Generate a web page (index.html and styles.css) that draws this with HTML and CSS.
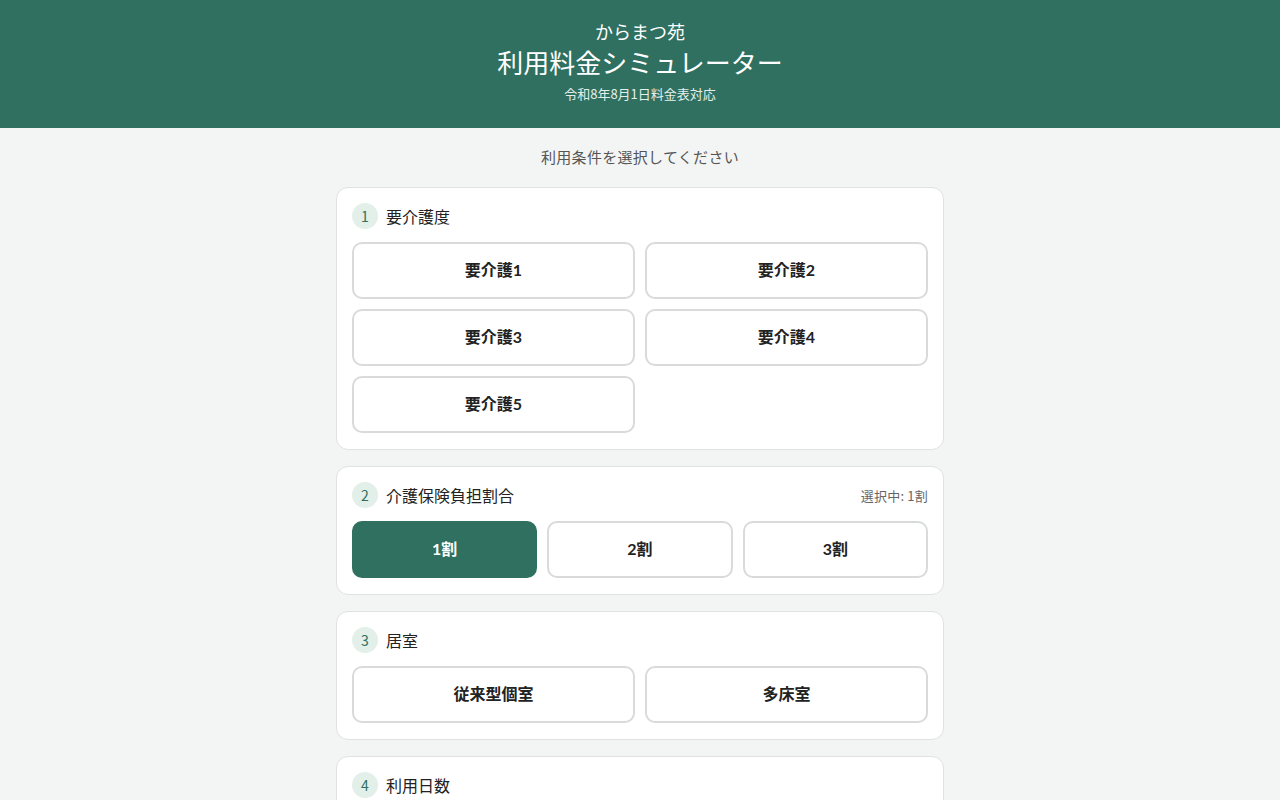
FILE: index.html
```html
<!DOCTYPE html>
<html lang="ja">
<head>
<meta charset="utf-8">
<title>からまつ苑 利用料金シミュレーター</title>
<link rel="stylesheet" href="styles.css">
</head>
<body>
<header class="hero">
  <div class="hero-org">からまつ苑</div>
  <h1 class="hero-title">利用料金シミュレーター</h1>
  <div class="hero-sub">令和8年8月1日料金表対応</div>
</header>
<main class="main">
  <p class="lead">利用条件を選択してください</p>

  <section class="card">
    <div class="card-head">
      <span class="badge">1</span>
      <span class="card-title">要介護度</span>
    </div>
    <div class="opts cols-2">
      <button class="opt">要介護1</button>
      <button class="opt">要介護2</button>
      <button class="opt">要介護3</button>
      <button class="opt">要介護4</button>
      <button class="opt">要介護5</button>
    </div>
  </section>

  <section class="card">
    <div class="card-head">
      <span class="badge">2</span>
      <span class="card-title">介護保険負担割合</span>
      <span class="card-note">選択中: 1割</span>
    </div>
    <div class="opts cols-3">
      <button class="opt is-active">1割</button>
      <button class="opt">2割</button>
      <button class="opt">3割</button>
    </div>
  </section>

  <section class="card">
    <div class="card-head">
      <span class="badge">3</span>
      <span class="card-title">居室</span>
    </div>
    <div class="opts cols-2">
      <button class="opt">従来型個室</button>
      <button class="opt">多床室</button>
    </div>
  </section>

  <section class="card">
    <div class="card-head">
      <span class="badge">4</span>
      <span class="card-title">利用日数</span>
    </div>
    <div class="opts cols-2">
      <button class="opt">30日</button>
      <button class="opt">31日</button>
    </div>
  </section>
</main>
</body>
</html>
```

FILE: styles.css
```css
* { box-sizing: border-box; }
html, body { margin: 0; padding: 0; }
body {
  background: #f3f5f4;
  font-family: Lato, "Noto Sans CJK JP", sans-serif;
  color: #222;
}
.hero {
  background: #2f7060;
  color: #fff;
  height: 128px;
  display: flex;
  flex-direction: column;
  align-items: center;
  padding-top: 19px;
  font-family: "Noto Sans CJK JP", sans-serif;
}
.hero-org {
  font-size: 18px;
  line-height: 24px;
}
.hero-title {
  margin: 2px 0 0;
  font-size: 26px;
  font-weight: 400;
  line-height: 34px;
}
.hero-sub {
  margin-top: 6px;
  font-size: 13px;
  line-height: 18px;
  color: #e4efea;
}
.main {
  width: 608px;
  margin: 0 auto;
  padding-top: 18px;
}
.lead {
  margin: 0 0 19px;
  text-align: center;
  font-size: 15px;
  line-height: 22px;
  letter-spacing: 0.3px;
  color: #555;
  font-family: "Noto Sans CJK JP", sans-serif;
}
.card {
  background: #fff;
  border: 1px solid #dfe2e1;
  border-radius: 12px;
  padding: 15px 15px 16px;
  margin-bottom: 16px;
}
.card-head {
  display: flex;
  align-items: center;
  height: 26px;
  margin-bottom: 13px;
}
.badge {
  width: 26px;
  height: 26px;
  border-radius: 50%;
  background: #e3efe9;
  color: #2f7060;
  font-size: 14px;
  display: flex;
  align-items: center;
  justify-content: center;
  font-family: "Noto Sans CJK JP", sans-serif;
}
.card-title {
  margin-left: 8px;
  font-size: 16px;
  color: #222;
  font-family: "Noto Sans CJK JP", sans-serif;
}
.card-note {
  margin-left: auto;
  font-size: 13px;
  letter-spacing: 0.2px;
  color: #666;
  font-family: "Noto Sans CJK JP", sans-serif;
}
.opts {
  display: grid;
  gap: 10px;
}
.cols-2 { grid-template-columns: 1fr 1fr; }
.cols-3 { grid-template-columns: 1fr 1fr 1fr; }
.opt {
  height: 57px;
  padding: 0 0 3px;
  border: 2px solid #d9dbda;
  border-radius: 10px;
  background: #fff;
  font-family: Lato, "Noto Sans CJK JP", sans-serif;
  font-weight: 700;
  font-size: 16px;
  color: #222;
  cursor: pointer;
}
.opt.is-active {
  background: #2f7060;
  border-color: #2f7060;
  color: #fff;
}
```
